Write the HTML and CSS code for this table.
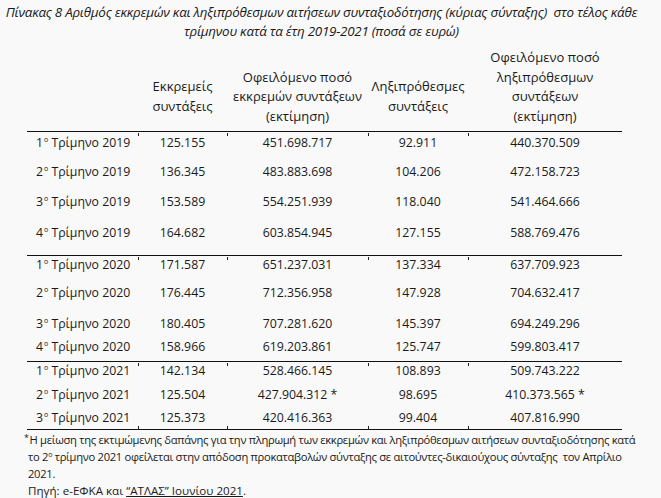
FILE: index.html
```html
<!DOCTYPE html>
<html lang="el">
<head>
<meta charset="utf-8">
<title>Πίνακας 8</title>
<link rel="stylesheet" href="styles.css">
</head>
<body>
<div class="page">
  <h1 class="title">Πίνακας 8 Αριθμός εκκρεμών και ληξιπρόθεσμων αιτήσεων συνταξιοδότησης (κύριας σύνταξης)&nbsp; στο τέλος κάθε<br>τρίμηνου κατά τα έτη 2019-2021 (ποσά σε ευρώ)</h1>

  <div class="table">
    <div class="row head">
      <div class="cell"></div>
      <div class="cell short">Εκκρεμείς<br>συντάξεις</div>
      <div class="cell">Οφειλόμενο ποσό<br>εκκρεμών συντάξεων<br>(εκτίμηση)</div>
      <div class="cell short">Ληξιπρόθεσμες<br>συντάξεις</div>
      <div class="cell">Οφειλόμενο ποσό<br>ληξιπρόθεσμων<br>συντάξεων<br>(εκτίμηση)</div>
    </div>

    <div class="row sep r1">
      <div class="cell label">1<sup>ο</sup> Τρίμηνο 2019</div>
      <div class="cell">125.155</div><div class="cell">451.698.717</div><div class="cell">92.911</div><div class="cell">440.370.509</div>
    </div>
    <div class="row r2">
      <div class="cell label">2<sup>ο</sup> Τρίμηνο 2019</div>
      <div class="cell">136.345</div><div class="cell">483.883.698</div><div class="cell">104.206</div><div class="cell">472.158.723</div>
    </div>
    <div class="row r3">
      <div class="cell label">3<sup>ο</sup> Τρίμηνο 2019</div>
      <div class="cell">153.589</div><div class="cell">554.251.939</div><div class="cell">118.040</div><div class="cell">541.464.666</div>
    </div>
    <div class="row r4">
      <div class="cell label">4<sup>ο</sup> Τρίμηνο 2019</div>
      <div class="cell">164.682</div><div class="cell">603.854.945</div><div class="cell">127.155</div><div class="cell">588.769.476</div>
    </div>

    <div class="row sep r5">
      <div class="cell label">1<sup>ο</sup> Τρίμηνο 2020</div>
      <div class="cell">171.587</div><div class="cell">651.237.031</div><div class="cell">137.334</div><div class="cell">637.709.923</div>
    </div>
    <div class="row r6">
      <div class="cell label">2<sup>ο</sup> Τρίμηνο 2020</div>
      <div class="cell">176.445</div><div class="cell">712.356.958</div><div class="cell">147.928</div><div class="cell">704.632.417</div>
    </div>
    <div class="row r7">
      <div class="cell label">3<sup>ο</sup> Τρίμηνο 2020</div>
      <div class="cell">180.405</div><div class="cell">707.281.620</div><div class="cell">145.397</div><div class="cell">694.249.296</div>
    </div>
    <div class="row r8">
      <div class="cell label">4<sup>ο</sup> Τρίμηνο 2020</div>
      <div class="cell">158.966</div><div class="cell">619.203.861</div><div class="cell">125.747</div><div class="cell">599.803.417</div>
    </div>

    <div class="row sep r9">
      <div class="cell label">1<sup>ο</sup> Τρίμηνο 2021</div>
      <div class="cell">142.134</div><div class="cell">528.466.145</div><div class="cell">108.893</div><div class="cell">509.743.222</div>
    </div>
    <div class="row r10">
      <div class="cell label">2<sup>ο</sup> Τρίμηνο 2021</div>
      <div class="cell">125.504</div><div class="cell">427.904.312 *</div><div class="cell">98.695</div><div class="cell">410.373.565 *</div>
    </div>
    <div class="row last r11">
      <div class="cell label">3<sup>ο</sup> Τρίμηνο 2021</div>
      <div class="cell">125.373</div><div class="cell">420.416.363</div><div class="cell">99.404</div><div class="cell">407.816.990</div>
    </div>
  </div>

  <div class="notes">
    <p class="note"><sup class="star">*</sup>&#8202;Η μείωση της εκτιμώμενης δαπάνης για την πληρωμή των εκκρεμών και ληξιπρόθεσμων αιτήσεων συνταξιοδότησης κατά<br>το 2<sup>ο</sup> τρίμηνο 2021 οφείλεται στην απόδοση προκαταβολών σύνταξης σε αιτούντες-δικαιούχους σύνταξης&nbsp; τον Απρίλιο<br>2021.</p>
    <p class="source">Πηγή: e-ΕΦΚΑ και <span class="ul">“ΑΤΛΑΣ” Ιουνίου 2021</span>.</p>
  </div>
</div>
</body>
</html>
```

FILE: styles.css
```css
html, body {
  margin: 0;
  padding: 0;
  background: #f9f9f9;
}

.page {
  width: 661px;
  height: 498px;
  overflow: hidden;
  font-family: "Open Sans", "Noto Sans", sans-serif;
  color: #1a1a1a;
}

.title {
  margin: 0;
  padding-top: 3px;
  padding-right: 18px;
  font-size: 13.4px;
  font-style: italic;
  font-weight: normal;
  line-height: 19px;
  text-align: center;
  letter-spacing: -0.25px;
  white-space: nowrap;
}

.table {
  margin-left: 27px;
  width: 595px;
}

.row {
  box-sizing: border-box;
  display: grid;
  grid-template-columns: 111px 89px 141px 100px 154px;
  font-size: 12.3px;
  line-height: 20px;
}

.cell {
  position: relative;
  text-align: center;
  white-space: nowrap;
}

.cell.label {
  text-align: left;
  padding-left: 9px;
}

.cell sup {
  font-size: 7px;
  line-height: 0;
  vertical-align: 5px;
  margin-left: 1px;
}

.head {
  height: 90px;
  font-size: 13px;
  line-height: 19.5px;
  align-items: end;
  padding-bottom: 5px;
}

.head .cell.short {
  padding-bottom: 10px;
}

.sep {
  border-top: 1px solid #111;
}

.last {
  border-bottom: 1px solid #111;
}

.sep .cell + .cell::before,
.last .cell + .cell::after {
  content: "";
  position: absolute;
  left: 0;
  width: 1px;
  height: 3px;
  background: #222;
}

.sep .cell + .cell::before { top: 0; }
.last .cell + .cell::after { bottom: 0; }

.r1 { height: 30px; padding-top: 1px; }
.r2 { height: 30px; padding-top: 1px; }
.r3 { height: 31px; padding-top: 1px; }
.r4 { height: 33px; padding-top: 1px; }
.r5 { height: 28px; padding-top: 1px; line-height: 16px; }
.r6 { height: 31px; }
.r7 { height: 23px; }
.r8 { height: 24px; }
.r9 { height: 24px; padding-top: 1px; line-height: 16px; }
.r10 { height: 23px; }
.r11 { height: 22px; }

.notes {
  padding-left: 28px;
  padding-top: 1px;
  font-size: 11.2px;
  line-height: 17px;
  letter-spacing: -0.3px;
  white-space: nowrap;
}

.notes p {
  margin: 0;
}

.note {
  text-indent: -4px;
}

.note .star {
  font-size: 9px;
  line-height: 0;
  vertical-align: 3px;
}

.note sup {
  font-size: 7px;
  line-height: 0;
  vertical-align: 4px;
}

.source {
  font-size: 11.6px;
  line-height: 16px;
  letter-spacing: 0;
  padding-top: 1px;
}

.ul {
  text-decoration: underline;
  text-underline-offset: 1px;
}
```
